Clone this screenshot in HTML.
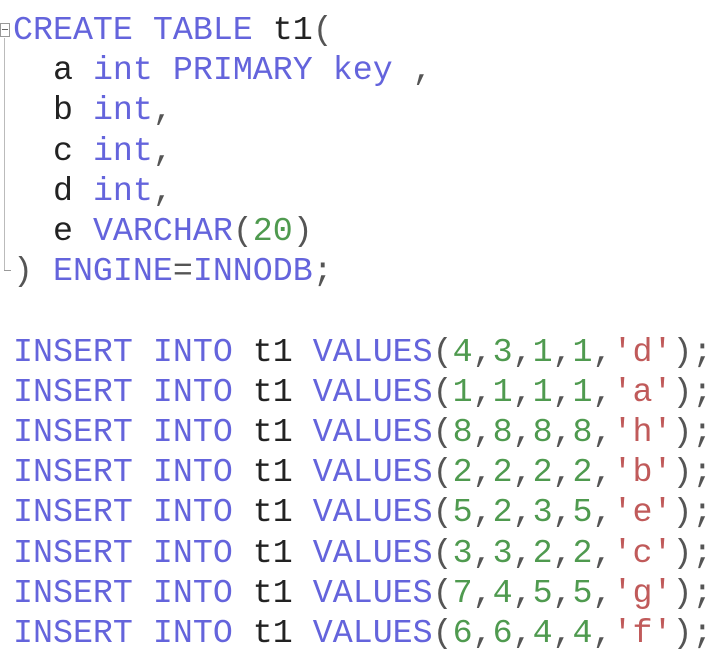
<!DOCTYPE html>
<html><head><style>
body{margin:0;background:#fff;width:718px;height:665px;overflow:hidden;position:relative}
pre{margin:0;position:absolute;left:13px;top:10px;font-family:"Liberation Mono","Courier New",monospace;font-size:33.3px;line-height:40.2px;color:#222}
.k{color:#6464dc}.n{color:#4f9a4f}.s{color:#c05a5a}.p{color:#555}
.fold{position:absolute;left:4px;top:38px;width:1px;height:232px;background:#bbb}
.box{position:absolute;left:0;top:23px;width:8px;height:12px;border:1px solid #999;background:#fff}
.box:after{content:"";position:absolute;left:1px;top:5px;width:6px;height:1px;background:#666}
.end{position:absolute;left:4px;top:270px;width:7px;height:1px;background:#999}
</style></head><body>
<div class="fold"></div><div class="box"></div><div class="end"></div>
<pre><span class="k">CREATE</span> <span class="k">TABLE</span> t1<span class="p">(</span>
  a <span class="k">int</span> <span class="k">PRIMARY</span> <span class="k">key</span> <span class="p">,</span>
  b <span class="k">int</span><span class="p">,</span>
  c <span class="k">int</span><span class="p">,</span>
  d <span class="k">int</span><span class="p">,</span>
  e <span class="k">VARCHAR</span><span class="p">(</span><span class="n">20</span><span class="p">)</span>
<span class="p">)</span> <span class="k">ENGINE</span><span class="p">=</span><span class="k">INNODB</span><span class="p">;</span>

<span class="k">INSERT</span> <span class="k">INTO</span> t1 <span class="k">VALUES</span><span class="p">(</span><span class="n">4</span><span class="p">,</span><span class="n">3</span><span class="p">,</span><span class="n">1</span><span class="p">,</span><span class="n">1</span><span class="p">,</span><span class="s">'d'</span><span class="p">);</span>
<span class="k">INSERT</span> <span class="k">INTO</span> t1 <span class="k">VALUES</span><span class="p">(</span><span class="n">1</span><span class="p">,</span><span class="n">1</span><span class="p">,</span><span class="n">1</span><span class="p">,</span><span class="n">1</span><span class="p">,</span><span class="s">'a'</span><span class="p">);</span>
<span class="k">INSERT</span> <span class="k">INTO</span> t1 <span class="k">VALUES</span><span class="p">(</span><span class="n">8</span><span class="p">,</span><span class="n">8</span><span class="p">,</span><span class="n">8</span><span class="p">,</span><span class="n">8</span><span class="p">,</span><span class="s">'h'</span><span class="p">);</span>
<span class="k">INSERT</span> <span class="k">INTO</span> t1 <span class="k">VALUES</span><span class="p">(</span><span class="n">2</span><span class="p">,</span><span class="n">2</span><span class="p">,</span><span class="n">2</span><span class="p">,</span><span class="n">2</span><span class="p">,</span><span class="s">'b'</span><span class="p">);</span>
<span class="k">INSERT</span> <span class="k">INTO</span> t1 <span class="k">VALUES</span><span class="p">(</span><span class="n">5</span><span class="p">,</span><span class="n">2</span><span class="p">,</span><span class="n">3</span><span class="p">,</span><span class="n">5</span><span class="p">,</span><span class="s">'e'</span><span class="p">);</span>
<span class="k">INSERT</span> <span class="k">INTO</span> t1 <span class="k">VALUES</span><span class="p">(</span><span class="n">3</span><span class="p">,</span><span class="n">3</span><span class="p">,</span><span class="n">2</span><span class="p">,</span><span class="n">2</span><span class="p">,</span><span class="s">'c'</span><span class="p">);</span>
<span class="k">INSERT</span> <span class="k">INTO</span> t1 <span class="k">VALUES</span><span class="p">(</span><span class="n">7</span><span class="p">,</span><span class="n">4</span><span class="p">,</span><span class="n">5</span><span class="p">,</span><span class="n">5</span><span class="p">,</span><span class="s">'g'</span><span class="p">);</span>
<span class="k">INSERT</span> <span class="k">INTO</span> t1 <span class="k">VALUES</span><span class="p">(</span><span class="n">6</span><span class="p">,</span><span class="n">6</span><span class="p">,</span><span class="n">4</span><span class="p">,</span><span class="n">4</span><span class="p">,</span><span class="s">'f'</span><span class="p">);</span></pre>
</body></html>
